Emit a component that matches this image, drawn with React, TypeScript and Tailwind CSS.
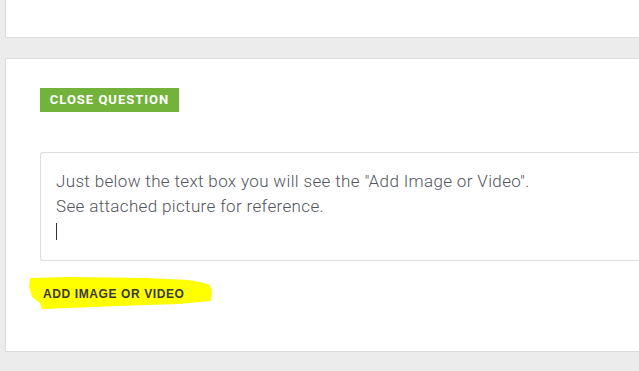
import React from 'react';

const App: React.FC = () => {
  return (
    <div
      className="h-[371px] w-[639px] overflow-hidden bg-[#ececec] pl-[5px]"
      style={{ fontFamily: 'Roboto, "Liberation Sans", sans-serif' }}
    >
      {/* Previous card (cut off at top) */}
      <div className="h-[38px] border-b border-l border-[#dcdcdc] bg-white" />

      {/* Question card */}
      <div className="mt-[20px] h-[294px] border border-r-0 border-[#dcdcdc] bg-white pl-[34px] pt-[29px]">
        <button className="flex h-[24px] w-[139px] items-center justify-center bg-[#73b33c] text-[13px] font-bold tracking-[1px] text-white">
          CLOSE QUESTION
        </button>

        {/* Answer text box */}
        <div className="mt-[40px] h-[109px] rounded-l-[3px] border border-r-0 border-[#dddddd] pl-[15px] pt-[16px] text-[17px] font-light leading-[25px] tracking-[0.35px] text-[#52555c]">
          <div>Just below the text box you will see the "Add Image or Video".</div>
          <div>See attached picture for reference.</div>
          <div className="mt-[4px] h-[17px] w-[1px] bg-[#333333]" />
        </div>

        {/* Highlighted link */}
        <div className="relative mt-[14px] h-[38px] w-[190px] -ml-[12px]">
          <svg className="absolute inset-0" width="190" height="38" viewBox="0 0 190 38">
            <path
              d="M2 3 L40 2 L120 3 L160 5 L172 7 L182 10 L184 16 L183 26 L150 29 L90 31 L40 33 L14 34 L12 28 L4 22 L1 12 Z"
              fill="#ffff00"
            />
          </svg>
          <span
            className="absolute left-[15px] top-[13px] text-[12px] font-bold leading-none tracking-[0.6px] text-[#3a3a2a]"
            style={{ fontFamily: '"Liberation Sans", Arial, sans-serif' }}
          >
            ADD IMAGE OR VIDEO
          </span>
        </div>
      </div>
    </div>
  );
};

export default App;
